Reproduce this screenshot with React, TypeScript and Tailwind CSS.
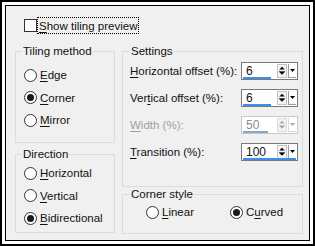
import React from 'react';

type Opt = { pre?: string; key: string; post: string; checked?: boolean };

function Radio({ checked }: { checked?: boolean }) {
  return (
    <span className="w-[13px] h-[13px] rounded-full border border-[#333] bg-white flex items-center justify-center shrink-0">
      {checked && <span className="w-[7px] h-[7px] rounded-full bg-[#1a1a1a]" />}
    </span>
  );
}

function Label({ o }: { o: Opt }) {
  return (
    <span className="whitespace-nowrap">
      {o.pre}
      <span className="underline underline-offset-2">{o.key}</span>
      {o.post}
    </span>
  );
}

function RadioItem({ o }: { o: Opt }) {
  return (
    <div className="h-[22.5px] flex items-center gap-[3px]">
      <Radio checked={o.checked} />
      <Label o={o} />
    </div>
  );
}

function Spin({ value, bar, disabled }: { value: string; bar: number; disabled?: boolean }) {
  const arrow = disabled ? '#a8a8a8' : '#000';
  return (
    <div
      className={`relative w-[57px] h-[18px] bg-white border flex items-center ${
        disabled ? 'border-[#c8c8c8] text-[#8c8c8c]' : 'border-[#7a7a7a]'
      }`}
    >
      <span className="pl-[4px] flex-1 leading-none text-[12px]">{value}</span>
      <span className={`w-[10px] h-[14px] border flex flex-col ${disabled ? 'border-[#dadada]' : 'border-[#c4c4c4]'} bg-[#f4f4f4]`}>
        <svg width="8" height="6" viewBox="0 0 8 6" className="mx-auto">
          <path d="M1 5 L4 2 L7 5 Z" fill={arrow} />
        </svg>
        <span className={`h-px ${disabled ? 'bg-[#c8c8c8]' : 'bg-[#555]'} mx-[1px]`} />
        <svg width="8" height="6" viewBox="0 0 8 6" className="mx-auto">
          <path d="M1 1 L7 1 L4 4 Z" fill={arrow} />
        </svg>
      </span>
      <span className={`ml-[1px] mr-[1px] w-[8px] h-[14px] border-l border-b ${disabled ? 'border-[#dadada]' : 'border-[#a0a0a0]'} flex items-center justify-center`}>
        <svg width="7" height="5" viewBox="0 0 7 5">
          <path d="M1 1 L6 1 L3.5 4 Z" fill={arrow} />
        </svg>
      </span>
      <span
        className={`absolute left-[1px] bottom-0 h-[2px] ${disabled ? 'bg-[#7fa7d4]' : 'bg-[#3d8ee6]'}`}
        style={{ width: bar }}
      />
    </div>
  );
}

function SettingRow({ o, value, bar, disabled }: { o: Opt; value: string; bar: number; disabled?: boolean }) {
  return (
    <div className={`h-[18px] flex items-center ${disabled ? 'text-[#a0a0a0]' : ''}`}>
      <span className="flex-1">
        <Label o={o} />
      </span>
      <Spin value={value} bar={bar} disabled={disabled} />
    </div>
  );
}

export default function App() {
  const tiling: Opt[] = [
    { key: 'E', post: 'dge' },
    { key: 'C', post: 'orner', checked: true },
    { key: 'M', post: 'irror' },
  ];
  const direction: Opt[] = [
    { key: 'H', post: 'orizontal' },
    { key: 'V', post: 'ertical' },
    { key: 'B', post: 'idirectional', checked: true },
  ];

  return (
    <div className="w-[315px] h-[246px] border-2 border-black bg-white p-[3px] font-['Liberation_Sans',sans-serif] text-[11.5px] text-[#111] leading-[14px]">
      <div className="h-full border border-black bg-[#f0f0f0]">
        <div className="pl-[18px] pt-[11px] flex items-center h-[28px]">
          <span className="w-[13px] h-[13px] border border-[#333] bg-white" />
          <span className="px-[1px] h-[17px] flex items-center border border-dotted border-black">
            <Label o={{ key: 'S', post: 'how tiling preview' }} />
          </span>
        </div>

        <div className="flex gap-[7px] pl-[9px] pt-[10px]">
          <div className="w-[100px] flex flex-col gap-[4px]">
            <fieldset className="h-[99px] border border-[#dcdcdc]">
              <legend className="ml-[6px] px-[1px]">Tiling method</legend>
              <div className="pt-[6px] pl-[8px]">
                {tiling.map((o) => (
                  <RadioItem key={o.post} o={o} />
                ))}
              </div>
            </fieldset>
            <fieldset className="h-[86px] border border-[#dcdcdc]">
              <legend className="ml-[6px] px-[1px]">Direction</legend>
              <div className="pt-[1px] pl-[8px]">
                {direction.map((o) => (
                  <RadioItem key={o.post} o={o} />
                ))}
              </div>
            </fieldset>
          </div>

          <div className="w-[181px] flex flex-col">
            <fieldset className="h-[143px] border border-[#dcdcdc]">
              <legend className="ml-[7px] px-[1px]">Settings</legend>
              <div className="pt-[4px] pl-[7px] pr-[4px] flex flex-col gap-[9px]">
                <SettingRow o={{ key: 'H', post: 'orizontal offset (%):' }} value="6" bar={28} />
                <SettingRow o={{ pre: 'Ver', key: 't', post: 'ical offset (%):' }} value="6" bar={28} />
                <SettingRow o={{ key: 'W', post: 'idth (%):' }} value="50" bar={25} disabled />
                <SettingRow o={{ key: 'T', post: 'ransition (%):' }} value="100" bar={53} />
              </div>
            </fieldset>
            <fieldset className="h-[47px] border border-[#dcdcdc]">
              <legend className="ml-[7px] px-[1px]">Corner style</legend>
              <div className="pt-[4px] pl-[23px] flex items-center">
                <div className="w-[84px] flex items-center gap-[3px]">
                  <Radio />
                  <Label o={{ key: 'L', post: 'inear' }} />
                </div>
                <div className="flex items-center gap-[3px]">
                  <Radio checked />
                  <Label o={{ pre: 'C', key: 'u', post: 'rved' }} />
                </div>
              </div>
            </fieldset>
          </div>
        </div>
      </div>
    </div>
  );
}
